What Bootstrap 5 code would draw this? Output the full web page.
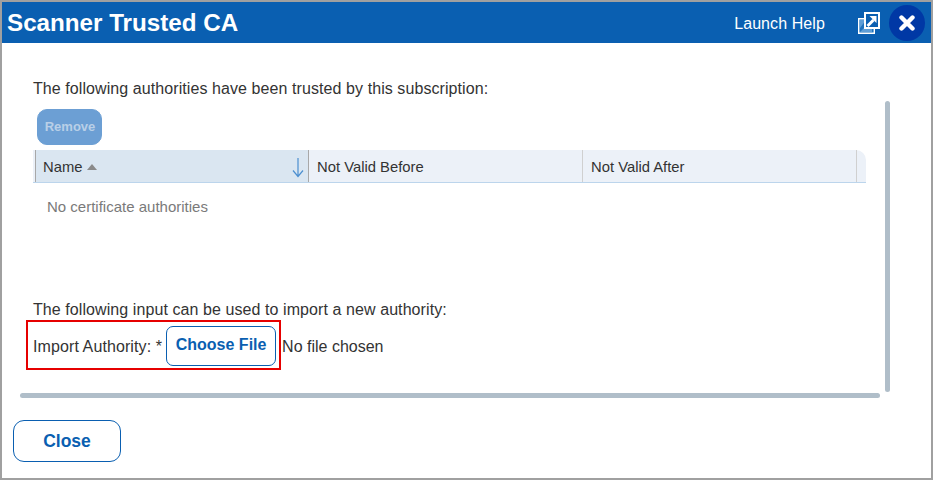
<!DOCTYPE html>
<html lang="en">
<head>
<meta charset="utf-8">
<title>Scanner Trusted CA</title>
<link href="https://cdn.jsdelivr.net/npm/bootstrap@5.3.0/dist/css/bootstrap.min.css" rel="stylesheet">
<style>
html,body{height:100%;margin:0;overflow:hidden}
body{font-family:"Liberation Sans",Arial,sans-serif;font-size:16px;color:#333;background:#fff}
.frame{width:933px;height:480px;border:2px solid #a0a0a0;position:relative}
.head{height:41px;background:#0a5fb1;color:#fff;padding:0 6px 0 5px}
.head-title{font-size:24.2px;font-weight:700;line-height:38px;margin:0}
.help{color:#fff;font-size:16px;letter-spacing:.09px;text-decoration:none;margin-right:33px;padding-top:2px}
.closer{width:36px;height:36px;border-radius:50%;background:#0038a5;border:0;padding:0;margin-left:9px}
.pane{padding:0 0 0 31px;height:334px;position:relative}
.intro{line-height:20px;padding-top:36px;margin:0 0 10px;letter-spacing:.08px}
.btn-remove{width:65px;height:36px;border-radius:10px;font-size:13px;font-weight:700;padding:0 0 0 1px;display:block;margin-left:4px}
.btn-remove:disabled{background:#6c9fd4;color:#b9cfe7;border:1px solid #6c9fd4;opacity:1}
.grid-head{width:833px;height:33px;margin:5px 0 0 0;padding-left:2px;background:#ecf1f8;border-bottom:1px solid #bcd5ec;border-top-right-radius:10px;font-size:14.8px;line-height:34px}
.cell{border-right:1px solid #d0d0d0;padding-left:8px;height:32px;flex:none}
.c1{width:274px;background:#dae6f1;border-left:1px solid #a8a8a8;border-right-color:#a8a8a8;padding-left:7px}
.c2{width:274px}
.c3{width:274px}
.tri{display:inline-block;width:0;height:0;border:5px solid transparent;border-top:0;border-bottom:6px solid #8a8a8a;vertical-align:2px}
.empty{color:#7a7a7a;font-size:15px;line-height:20px;padding:14px 0 0 14px;height:117px}
.import-text{line-height:20px;margin:0;letter-spacing:.08px}
.import-box{width:255px;height:50px;margin-left:-7px;border:2px solid #e60000;padding:2px 0 0 5px;white-space:nowrap}
.import-label{letter-spacing:.1px;padding-top:2px}
.file-state{padding-top:2px}
.choose{flex:none;width:110px;height:40px;border:1px solid #0a5fb1;border-radius:7px;background:#fff;color:#0a5fb1;font-weight:700;font-size:16px;padding:0 0 3px;margin:0 6px 0 4px}
.track-v{position:absolute;left:883px;top:58px;width:5px;height:291px;border-radius:3px;background:#b0bec9}
.track-h{position:absolute;left:18px;top:350px;width:860px;height:5px;border-radius:3px;background:#b0bec9}
.foot{padding:43px 0 0 11px}
.btn-close-dlg{width:108px;height:42px;border:1px solid #0a5fb1;border-radius:11px;background:#fff;color:#0a5fb1;font-weight:700;font-size:17.5px;padding:0}
</style>
</head>
<body>
<div class="frame">
  <header class="head d-flex align-items-center">
    <h1 class="head-title flex-grow-1">Scanner Trusted CA</h1>
    <a class="help" href="#">Launch Help</a>
    <svg width="22" height="22" viewBox="0 0 22 22" fill="none" aria-hidden="true"><path d="M.7 6.700h15.600v14.600H.7z" fill="#1f72bd" stroke="#fff" stroke-width="1.400"/><path d="M2 16l6-8h-6zM2 20l12-12v12z" fill="#5f9ed6"/><path d="M7 1h14v15H7z" stroke="#fff" stroke-width="2" fill="#0a5fb1"/><path d="M9.500 14l6-6" stroke="#fff" stroke-width="3"/><path d="M11.500 4h7v7z" fill="#fff"/></svg>
    <button class="closer d-flex align-items-center justify-content-center" aria-label="Close"><svg width="16" height="16" viewBox="0 0 16 16" aria-hidden="true"><path d="M2.500 2.500l11 11M13.500 2.500l-11 11" stroke="#fff" stroke-width="4.400" stroke-linecap="round"/></svg></button>
  </header>
  <main class="pane">
    <p class="intro">The following authorities have been trusted by this subscription:</p>
    <button class="btn-remove" disabled>Remove</button>
    <div class="grid-head d-flex">
      <div class="cell c1 d-flex justify-content-between"><span>Name <i class="tri"></i></span><svg class="me-1 mt-2" width="12" height="20" viewBox="0 0 12 20" aria-hidden="true"><path d="M6 0v18M1 12.500l5 6 5-6" stroke="#4c8fd0" stroke-width="1.200" fill="none"/></svg></div>
      <div class="cell c2">Not Valid Before</div>
      <div class="cell c3">Not Valid After</div>
    </div>
    <div class="empty">No certificate authorities</div>
    <p class="import-text">The following input can be used to import a new authority:</p>
    <div class="import-box d-flex align-items-center"><span class="import-label">Import Authority: *</span><button class="choose">Choose File</button><span class="file-state">No file chosen</span></div>
    <div class="track-v"></div>
    <div class="track-h"></div>
  </main>
  <footer class="foot"><button class="btn-close-dlg">Close</button></footer>
</div>
<script src="https://cdn.jsdelivr.net/npm/bootstrap@5.3.0/dist/js/bootstrap.bundle.min.js"></script>
</body>
</html>
